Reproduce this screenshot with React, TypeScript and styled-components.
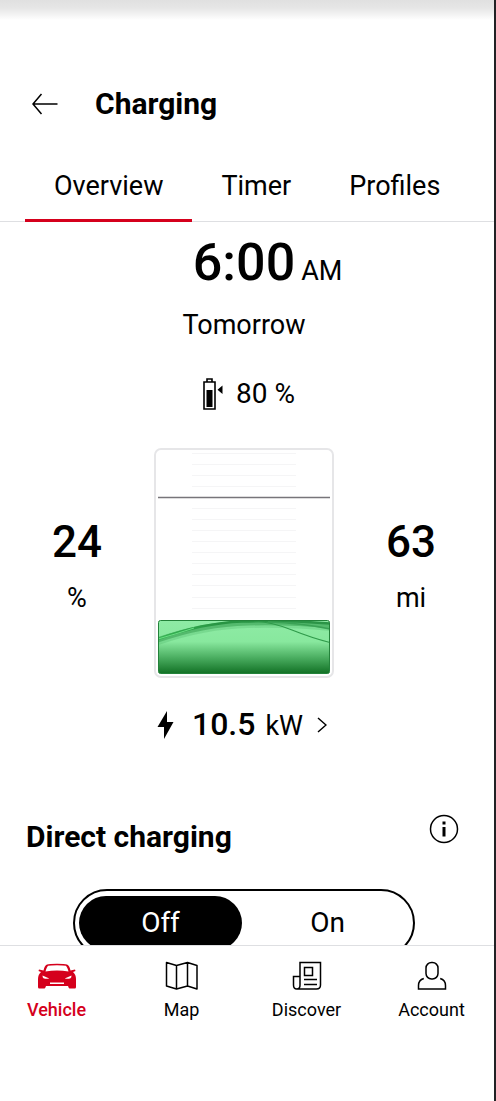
import React, { useState } from "react";
import styled, { createGlobalStyle } from "styled-components";

const RED = "#d5001c";

const GlobalStyle = createGlobalStyle`
  *, *::before, *::after { box-sizing: border-box; }
  body { margin: 0; background: #fff; color: #000; font-family: Roboto, "Liberation Sans", sans-serif; }
  button, input { font: inherit; color: inherit; }
  h1, h2, p { margin: 0; }
`;

const Screen = styled.div`
  display: flex;
  flex-direction: column;
  height: 100vh;
  overflow: hidden;
  background: #fff;
  border-right: 2px solid #222225;
`;

const StatusShade = styled.div`
  flex: none;
  height: 20px;
  background: linear-gradient(#e0e0e0, #e6e6e6 40%, #f4f4f4 75%, #fff);
`;

const Header = styled.header`
  display: flex;
  flex: none;
  align-items: center;
  gap: 36px;
  padding: 64px 32px 0;
`;

const IconButton = styled.button`
  display: flex;
  padding: 0;
  border: 0;
  background: none;
  cursor: pointer;
`;

const Title = styled.h1`
  font-size: 30px;
  line-height: 40px;
  font-weight: 700;
`;

const Tabs = styled.div`
  display: flex;
  flex: none;
  margin-top: 28px;
  padding-left: 25px;
  border-bottom: 1px solid #dedfe2;
`;

const Tab = styled.button<{ $active: boolean }>`
  height: 70px;
  margin-bottom: -1px;
  padding: 0 29px;
  border: 0;
  border-bottom: 3px solid ${(p) => (p.$active ? RED : "transparent")};
  background: none;
  font-size: 27px;
  line-height: 32px;
  cursor: pointer;
`;

const Content = styled.main`
  flex: 1;
  min-height: 0;
  overflow: hidden;
`;

const Overview = styled.section`
  display: flex;
  flex-direction: column;
  align-items: center;
  padding-right: 6px;
`;

const TimeRow = styled.p`
  display: grid;
  grid-template-columns: 1fr auto 1fr;
  align-items: baseline;
  column-gap: 6px;
  width: 100%;
  margin-top: 11px;
  line-height: 60px;
`;

const Time = styled.strong`
  grid-column: 2;
  font-size: 52px;
  font-weight: 500;
`;

const Unit = styled.span`
  font-size: 27px;
  font-weight: 400;
`;

const Day = styled.p`
  margin-top: 8px;
  font-size: 27px;
  line-height: 32px;
`;

const Target = styled.p`
  display: flex;
  align-items: center;
  gap: 12px;
  margin-top: 37px;
  padding-left: 10px;
  font-size: 28px;
  line-height: 32px;
`;

const Levels = styled.div`
  display: grid;
  grid-template-columns: 1fr 180px 1fr;
  align-items: center;
  width: 100%;
  margin-top: 38px;
`;

const Reading = styled.p`
  display: flex;
  flex-direction: column;
  align-items: center;
  gap: 14px;
  padding-top: 4px;
`;

const Amount = styled.strong`
  font-size: 44px;
  line-height: 52px;
  font-weight: 500;
`;

const Gauge = styled.div`
  height: 230px;
  padding: 2px;
  border: 2px solid #e6e6e8;
  border-radius: 7px;
  svg { display: block; width: 100%; height: 100%; }
`;

const PowerButton = styled.button`
  display: flex;
  align-items: center;
  margin-top: 26px;
  padding: 0 4px 0 0;
  border: 0;
  background: none;
  font-size: 28px;
  line-height: 40px;
  cursor: pointer;
`;

const Power = styled.span`
  display: flex;
  align-items: baseline;
  gap: 10px;
  margin: 0 14px 0 18px;
`;

const PowerValue = styled.strong`
  font-size: 32px;
  font-weight: 500;
`;

const Direct = styled.section`
  padding: 0 35px 0 26px;
`;

const SectionHead = styled.div`
  display: flex;
  align-items: flex-start;
  justify-content: space-between;
  margin-top: 68px;
`;

const SectionTitle = styled.h2`
  padding-top: 3px;
  font-size: 30px;
  line-height: 40px;
  font-weight: 700;
`;

const Switch = styled.div`
  display: flex;
  gap: 4px;
  height: 68px;
  margin: 32px 44px 0 47px;
  padding: 5px 4px;
  border: 2px solid #000;
  border-radius: 34px;
`;

const Option = styled.label`
  display: grid;
  flex: 1;
  place-items: center;
  border-radius: 28px;
  font-size: 28px;
  line-height: 32px;
  cursor: pointer;
  &:has(input:checked) { background: #000; color: #fff; }
`;

const HiddenRadio = styled.input`
  position: absolute;
  opacity: 0;
  pointer-events: none;
`;

const NavBar = styled.nav`
  display: grid;
  flex: none;
  grid-template-columns: repeat(4, 1fr);
  height: 156px;
  margin-left: -6px;
  border-top: 1px solid #dedfe2;
  background: #fff;
`;

const NavLink = styled.a<{ $active?: boolean }>`
  display: flex;
  flex-direction: column;
  align-items: center;
  gap: 6px;
  padding-top: 14px;
  color: ${(p) => (p.$active ? RED : "#000")};
  font-size: 18px;
  line-height: 24px;
  font-weight: ${(p) => (p.$active ? 500 : 400)};
  text-decoration: none;
`;

const BackIcon = () => (
  <svg width="27" height="24" viewBox="0 0 27 24" fill="none" stroke="#000" strokeWidth="1.5" aria-hidden="true">
    <path d="M25.5 12H1M9.5 2 1 12l8.5 10" />
  </svg>
);

const BatteryIcon = () => (
  <svg width="21" height="32" viewBox="0 0 21 32" aria-hidden="true">
    <path d="M1 4h11v27H1z" fill="none" stroke="#000" strokeWidth="1.6" />
    <path d="M4 4V1h5v3" fill="none" stroke="#000" strokeWidth="1.6" />
    <path d="M3.5 12h6v17h-6zM19.5 7.5v8.5l-5-4.2z" fill="#000" />
  </svg>
);

const BoltIcon = () => (
  <svg width="17" height="28" viewBox="0 0 17 28" aria-hidden="true">
    <path d="M10 0 .5 16H7L7 28l9.5-17H10z" fill="#000" />
  </svg>
);

const ChevronIcon = () => (
  <svg width="10" height="16" viewBox="0 0 10 16" fill="none" stroke="#000" strokeWidth="1.5" aria-hidden="true">
    <path d="M1 1l8 7-8 7" />
  </svg>
);

const InfoIcon = () => (
  <svg width="30" height="30" viewBox="0 0 30 30" aria-hidden="true">
    <circle cx="15" cy="15" r="13.5" fill="none" stroke="#000" strokeWidth="1.5" />
    <path d="M13.5 7.5h3v3h-3zM13.5 13h3v9.5h-3z" fill="#000" />
  </svg>
);

const CarIcon = () => (
  <svg width="40" height="32" viewBox="0 0 40 32" aria-hidden="true">
    <path
      fill={RED}
      fillRule="evenodd"
      d="M10 4.500Q12 3.800 20 3.800t10 .7Q32.500 5.500 33.500 10.500L38 9.500l.5 1.500-2.500 1Q39 14.500 39 19v8q0 1.500-1.200 1.500h-5q-1 0-1.300-1.200L31 26H9l-.5 1.300Q8.200 28.500 7.200 28.500h-5Q1 28.500 1 27V19q0-4.500 3-7L1.500 11l.5-1.500 4.500 1Q7.500 5.500 10 4.500zM11.200 5.800Q9.800 6.800 8.500 11.500q11.500-2.200 23 0Q30.200 6.800 28.800 5.800 26.500 5.200 20 5.200T11.200 5.800zM5.500 15.500q0 2 1 2.700 2.500 1 5.800.3zM34.500 15.500q0 2-1 2.700-2.500 1-5.800.3zM13 22.500v1.500h14v-1.500z"
    />
  </svg>
);

const MapIcon = () => (
  <svg width="34" height="32" viewBox="0 0 34 32" fill="none" stroke="#000" strokeWidth="1.5" strokeLinejoin="round" aria-hidden="true">
    <path d="M1.500 2.500l10 3 11-3 9.500 3V29l-9.500-3-11 3-10-3zM11.500 5.500V29M22.500 2.500V26" />
  </svg>
);

const NewsIcon = () => (
  <svg width="30" height="32" viewBox="0 0 30 32" fill="none" stroke="#000" strokeWidth="1.5" aria-hidden="true">
    <path d="M8 25V2.5h20.500V25q0 4-4 4H4.800M8 16.500H1.500V25q0 4 3.300 4T8 25M12.500 7.500h8v8h-8zM12 19.500h13M12 24.500h13" />
  </svg>
);

const PersonIcon = () => (
  <svg width="30" height="32" viewBox="0 0 30 32" fill="none" stroke="#000" strokeWidth="1.5" aria-hidden="true">
    <rect x="9" y="2.5" width="12" height="16.5" rx="5.5" />
    <path d="M6.800 18.500Q1.500 20 1.500 25.500V29h27v-3.500q0-5.500-5.300-7" />
  </svg>
);

const SCALE_MARKS = [1, 12, 23, 34, 56, 67, 78, 89, 100, 111, 122, 133, 145, 156];

const ChargeLevel = () => (
  <svg viewBox="0 0 172 222" preserveAspectRatio="none" role="img" aria-label="Battery at 24 percent, target 80 percent">
    <defs>
      <linearGradient id="charge" x1="0" y1="0" x2="0" y2="1">
        <stop offset="0" stopColor="#8eeba5" />
        <stop offset="0.4" stopColor="#88e89e" />
        <stop offset="0.7" stopColor="#4bae61" />
        <stop offset="1" stopColor="#127125" />
      </linearGradient>
      <linearGradient id="wave" x1="0" y1="0" x2="1" y2="0">
        <stop offset="0" stopColor="#35b552" />
        <stop offset="0.35" stopColor="#289443" />
        <stop offset="1" stopColor="#2c9447" />
      </linearGradient>
      <clipPath id="fill">
        <rect x="0.5" y="168.500" width="171" height="53" rx="2" />
      </clipPath>
    </defs>
    {SCALE_MARKS.map((y) => (
      <path key={y} d={`M34 ${y}.5h104`} stroke="#f5f5f6" />
    ))}
    <path d="M0 45.5h172" stroke="#77757a" strokeWidth="1.5" />
    <rect x="0.5" y="168.5" width="171" height="53" rx="2" fill="url(#charge)" />
    <g clipPath="url(#fill)" fill="none">
      <path d="M0 189Q46 173 90 172t82 3" stroke="#2f9a4a" strokeOpacity="0.2" strokeWidth="8" />
      <path d="M0 188Q46 172 90 171t82 3" stroke="#2f9a4a" strokeOpacity="0.5" strokeWidth="5" />
      <path d="M0 187Q44 171 84 169.500t88 2" stroke="url(#wave)" strokeWidth="2.500" />
      <path d="M0 187Q18 182 36 176" stroke="#6bdc84" />
      <path d="M110 170q34 1 62 7" stroke="#3aa255" strokeWidth="1.500" />
      <path d="M96 169q18 1 38 9 20 8 38 12.500" stroke="#2f9a4a" strokeWidth="1.200" />
    </g>
    <rect x="0.5" y="168.5" width="171" height="53" rx="2" fill="none" stroke="#23823a" />
  </svg>
);

const TABS = ["Overview", "Timer", "Profiles"];
const STATES = ["Off", "On"];

export default function App() {
  const [tab, setTab] = useState("Overview");
  const [direct, setDirect] = useState("Off");

  return (
    <Screen>
      <GlobalStyle />
      <StatusShade />
      <Header>
        <IconButton aria-label="Back"><BackIcon /></IconButton>
        <Title>Charging</Title>
      </Header>
      <Tabs role="tablist">
        {TABS.map((name) => (
          <Tab key={name} role="tab" aria-selected={tab === name} $active={tab === name} onClick={() => setTab(name)}>
            {name}
          </Tab>
        ))}
      </Tabs>
      <Content>
        <Overview>
          <TimeRow><Time>6:00</Time><Unit>AM</Unit></TimeRow>
          <Day>Tomorrow</Day>
          <Target><BatteryIcon />80 %</Target>
          <Levels>
            <Reading><Amount>24</Amount><Unit>%</Unit></Reading>
            <Gauge><ChargeLevel /></Gauge>
            <Reading><Amount>63</Amount><Unit>mi</Unit></Reading>
          </Levels>
          <PowerButton>
            <BoltIcon />
            <Power><PowerValue>10.5</PowerValue><Unit>kW</Unit></Power>
            <ChevronIcon />
          </PowerButton>
        </Overview>
        <Direct>
          <SectionHead>
            <SectionTitle>Direct charging</SectionTitle>
            <IconButton aria-label="About direct charging"><InfoIcon /></IconButton>
          </SectionHead>
          <Switch role="radiogroup" aria-label="Direct charging">
            {STATES.map((name) => (
              <Option key={name}>
                <HiddenRadio type="radio" name="direct" checked={direct === name} onChange={() => setDirect(name)} />
                {name}
              </Option>
            ))}
          </Switch>
        </Direct>
      </Content>
      <NavBar aria-label="Main">
        <NavLink href="#vehicle" $active aria-current="page"><CarIcon />Vehicle</NavLink>
        <NavLink href="#map"><MapIcon />Map</NavLink>
        <NavLink href="#discover"><NewsIcon />Discover</NavLink>
        <NavLink href="#account"><PersonIcon />Account</NavLink>
      </NavBar>
    </Screen>
  );
}
